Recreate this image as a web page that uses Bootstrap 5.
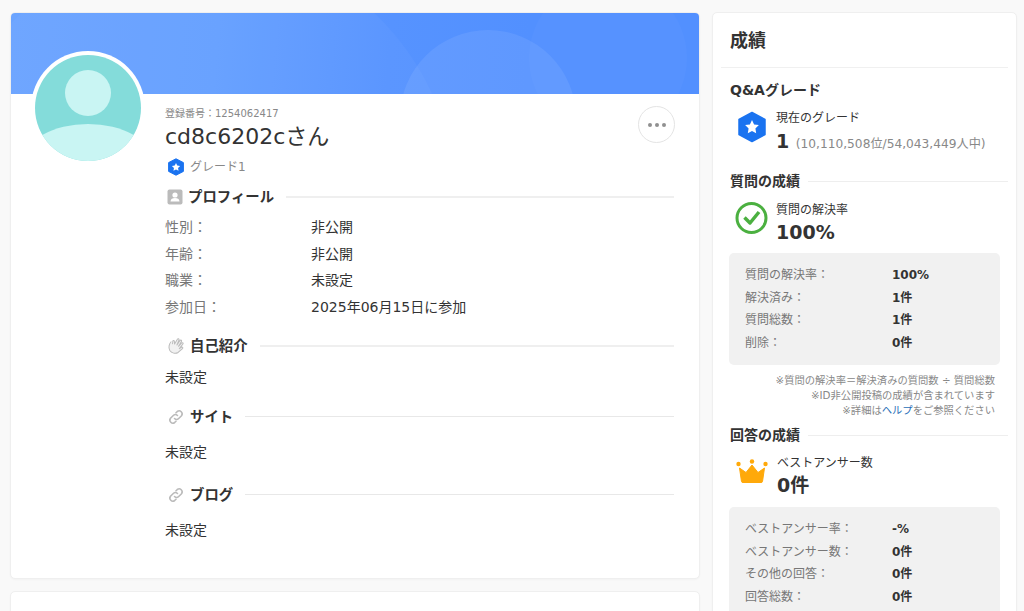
<!DOCTYPE html>
<html lang="ja"><head><meta charset="utf-8">
<link href="https://cdn.jsdelivr.net/npm/bootstrap@5.3.0/dist/css/bootstrap.min.css" rel="stylesheet">
<style>
html,body{height:611px;overflow:hidden}
body{background:#f9f9f9;font-family:"DejaVu Sans","Noto Sans CJK JP",sans-serif;color:#333;font-size:14px}
.shell{padding:12px 7px 0 10px;gap:12px}
.leftcol{width:690px;flex:none}
.rightcol{width:305px;flex:none}
.panel{background:#fff;border:1px solid #efefef;border-radius:5px;box-shadow:0 1px 2px rgba(0,0,0,.03)}
.mainpanel{height:567px;margin-bottom:12px;position:relative;overflow:hidden}
.stub{height:60px}
.banner{height:81px;background:linear-gradient(95deg,#6ba4ff 0%,#659fff 30%,#5693ff 55%,#5290ff 75%);position:relative;overflow:hidden}
.blob{position:absolute;border-radius:50%}
.blob1{left:389px;top:17px;width:176px;height:176px;background:rgba(255,255,255,.08)}
.blob2{left:518px;top:-34px;width:158px;height:158px;background:rgba(255,255,255,.025)}
.blob3{left:-70px;top:-70px;width:514px;height:514px;background:rgba(255,255,255,.03)}
.avatar{position:absolute;left:20px;top:38px;width:114px;height:114px;border-radius:50%;background:#fff;padding:4px}
.avatar svg{display:block}
.inner{padding:12px 25px 0 154px;position:relative}
.regno{font-size:10px;color:#888;line-height:16px}
.uname{font-size:22px;line-height:30px;color:#333;font-weight:400}
.grade{font-size:12px;color:#888;line-height:18px;margin-top:6px;gap:5px}
.grade svg{margin-left:2px}
.morebtn{position:absolute;right:24px;top:12px;width:37px;height:37px;border:1px solid #e4e4e4;border-radius:50%;background:#fff;gap:3px}
.morebtn i{display:block;width:4px;height:4px;border-radius:50%;background:#909090}
.sechead{font-size:14.4px;font-weight:700;color:#333;line-height:20px;gap:5px}
.sechead svg{margin-left:2px}
.sechead::after{content:"";flex:1;height:2px;background:#efefef;margin-left:7px}
.secsub::after{height:1px;background:#e8e8e8}
.prof{display:grid;grid-template-columns:146px 1fr;font-size:14px;line-height:26.7px;margin:7px 0 0}
.prof dt{font-weight:400;color:#777}
.prof dd{margin:0;color:#333}
.plain{font-size:14px;line-height:20px;color:#333}
.ttl{font-size:18px;font-weight:700;line-height:26px;color:#333;padding:15px 17px 13px;margin:0}
.rule{height:1px;background:#f0f0f0;margin:0 8px}
.h3row{font-size:14px;font-weight:700;line-height:20px;padding:0 8px 0 17px;color:#333}
.h3row.lined{display:flex;align-items:center}
.h3row.lined::after{content:"";flex:1;height:1px;background:#eee;margin-left:8px}
.stat{padding:0 17px 0 24px;gap:9px}
.stat.tight{gap:8px}
.hexi{margin-top:2px}
.statlab{font-size:12px;line-height:18px;color:#333}
.statval{font-size:19px;font-weight:700;line-height:25px;color:#333}
.tight .statval{margin-top:1px}
.statval small{font-size:12.200px;font-weight:400;color:#888}
.graybox{background:#f1f1f1;border-radius:5px;margin:0 16px;padding:11px 16px 11px;display:grid;grid-template-columns:147px 1fr;font-size:12px;line-height:22.5px}
.graybox span{color:#777}
.graybox b{color:#333;font-weight:700}
.notes{font-size:10.300px;line-height:15px;color:#888;text-align:right;padding:0 21px 0 17px;margin:8px 0 0}
.notes a{color:#2a70b8;text-decoration:none}
</style></head><body>
<div class="shell d-flex align-items-start">
<div class="leftcol">
<section class="panel mainpanel">
<div class="banner"><div class="blob blob3"></div><div class="blob blob1"></div><div class="blob blob2"></div></div>
<div class="avatar"><svg width="106" height="106" viewBox="0 0 106 106"><defs><clipPath id="av"><circle cx="53" cy="53" r="53"/></clipPath></defs><g clip-path="url(#av)"><rect width="106" height="106" fill="#84dcda"/><circle cx="53" cy="38" r="23" fill="#c9f5f3"/><ellipse cx="53" cy="106" rx="64" ry="37" fill="#c9f5f3"/></g></svg></div>
<div class="inner">
<div class="regno">登録番号：1254062417</div>
<div class="uname">cd8c6202cさん</div>
<div class="grade d-flex align-items-center"><svg width="18" height="18" viewBox="0 0 18 18"><path d="M9 .8 16.400 4.600V13.400L9 17.200 1.600 13.400V4.600Z" fill="#1a73f0" stroke="#1a73f0" stroke-linejoin="round"/><path d="m9 4.900 1.250 2.600 2.850.4-2.050 2 .5 2.850L9 11.400 6.450 12.750l.5-2.850-2.050-2 2.850-.4Z" fill="#fff"/></svg><span>グレード1</span></div>
<button class="morebtn d-flex align-items-center justify-content-center p-0" aria-label="more"><i></i><i></i><i></i></button>
<div class="sechead d-flex align-items-center" style="margin-top:11px"><svg width="16" height="16" viewBox="0 0 16 16"><rect x=".5" y=".5" width="15" height="15" rx="2" fill="#bbb"/><circle cx="8" cy="6" r="2.600" fill="#fff"/><path d="M3.500 12.500c.2-2.600 2-3.400 4.500-3.400s4.300.8 4.500 3.400z" fill="#fff"/></svg><span>プロフィール</span></div>
<dl class="prof"><dt>性別：</dt><dd>非公開</dd><dt>年齢：</dt><dd>非公開</dd><dt>職業：</dt><dd>未設定</dd><dt>参加日：</dt><dd>2025年06月15日に参加</dd></dl>
<div class="sechead d-flex align-items-center" style="margin-top:15px"><svg width="18" height="18" viewBox="0 0 18 18" fill="#f1f1f1" stroke="#bbb" stroke-width="1" stroke-linecap="round" stroke-linejoin="round"><path transform="rotate(18 9 9)" d="M3 6.500C1.800 9 2 13 4.500 15.200 7 17.300 11 16.800 13 14.500L16 9.500c.6-1-.8-1.900-1.500-1L13 10.500 15 5c.4-1.100-1.100-1.600-1.600-.6L11.500 8.500 12.800 3c.3-1.200-1.300-1.500-1.700-.4L9.600 7.800 10 2.200C10 1 8.400 1 8.200 2.100L7 7.500 6 5C5.500 4 4.200 4.500 4.500 5.500L5 8"/></svg><span>自己紹介</span></div>
<div class="plain" style="margin-top:11px">未設定</div>
<div class="sechead secsub d-flex align-items-center" style="margin-top:20px"><svg width="18" height="18" viewBox="0 0 18 18" fill="none" stroke="#bbb" stroke-width="1.600" stroke-linecap="round"><path d="M7.500 10.500a3 3 0 0 0 4.200 0l2.800-2.800a3 3 0 0 0-4.200-4.200L9 4.800"/><path d="M10.500 7.500a3 3 0 0 0-4.200 0l-2.800 2.800a3 3 0 0 0 4.200 4.200L9 13.200"/></svg><span>サイト</span></div>
<div class="plain" style="margin-top:15px">未設定</div>
<div class="sechead secsub d-flex align-items-center" style="margin-top:23px"><svg width="18" height="18" viewBox="0 0 18 18" fill="none" stroke="#bbb" stroke-width="1.600" stroke-linecap="round"><path d="M7.500 10.500a3 3 0 0 0 4.200 0l2.800-2.800a3 3 0 0 0-4.200-4.200L9 4.800"/><path d="M10.500 7.500a3 3 0 0 0-4.200 0l-2.800 2.800a3 3 0 0 0 4.200 4.200L9 13.200"/></svg><span>ブログ</span></div>
<div class="plain" style="margin-top:15px">未設定</div>
</div>
</section>
<section class="panel stub"></section>
</div>
<aside class="rightcol panel">
<h2 class="ttl">成績</h2>
<div class="rule"></div>
<div class="h3row" style="margin-top:12px">Q&amp;Aグレード</div>
<div class="stat d-flex" style="margin-top:9px"><svg width="30" height="32" viewBox="0 0 30 32" class="hexi flex-none"><path d="M15 1.500 28 8.500V23.500L15 30.500 2 23.500V8.500Z" fill="#1a73f0" stroke="#1a73f0" stroke-width="1.500" stroke-linejoin="round"/><path d="m15 9 2.100 4.400 4.800.7-3.500 3.400.8 4.800-4.200-2.300-4.200 2.300.8-4.800-3.500-3.400 4.800-.7Z" fill="#fff"/></svg><div class="statbody"><div class="statlab">現在のグレード</div><div class="statval" style="margin-top:2px">1 <small>(10,110,508位/54,043,449人中)</small></div></div></div>
<div class="h3row lined" style="margin-top:14px">質問の成績</div>
<div class="stat tight d-flex" style="margin-top:10px"><svg width="33" height="33" viewBox="0 0 33 33" class="flex-none" style="margin-left:-2px"><circle cx="16.500" cy="17" r="14.500" fill="none" stroke="#4bb040" stroke-width="3"/><path d="M9.500 16.500 15 22 24 11" fill="none" stroke="#4bb040" stroke-width="3.500" stroke-linejoin="round"/></svg><div class="statbody"><div class="statlab">質問の解決率</div><div class="statval">100%</div></div></div>
<div class="graybox" style="margin-top:8px"><span>質問の解決率：</span><b>100%</b><span>解決済み：</span><b>1件</b><span>質問総数：</span><b>1件</b><span>削除：</span><b>0件</b></div>
<p class="notes">※質問の解決率＝解決済みの質問数 ÷ 質問総数<br>※ID非公開投稿の成績が含まれています<br>※詳細は<a href="#">ヘルプ</a>をご参照ください</p>
<div class="h3row lined" style="margin-top:7px">回答の成績</div>
<div class="stat tight d-flex" style="margin-top:9px"><svg width="34" height="28" viewBox="0 0 34 28" class="flex-none" style="margin:5px 0 0 -2px"><circle cx="3.500" cy="5" r="2.200" fill="#ffa90a"/><circle cx="17" cy="2.500" r="2.200" fill="#ffa90a"/><circle cx="30.500" cy="5" r="2.200" fill="#ffa90a"/><path d="M4.500 9 11 13.500 17 6 23 13.500 29.500 9 27.500 22.500Q27.400 23.500 26 23.500H8Q6.600 23.500 6.500 22.500Z" fill="#ffa90a" stroke="#ffa90a" stroke-linejoin="round"/></svg><div class="statbody"><div class="statlab">ベストアンサー数</div><div class="statval">0件</div></div></div>
<div class="graybox" style="margin-top:9px"><span>ベストアンサー率：</span><b>-%</b><span>ベストアンサー数：</span><b>0件</b><span>その他の回答：</span><b>0件</b><span>回答総数：</span><b>0件</b></div>
</aside>
</div>
</body></html>
